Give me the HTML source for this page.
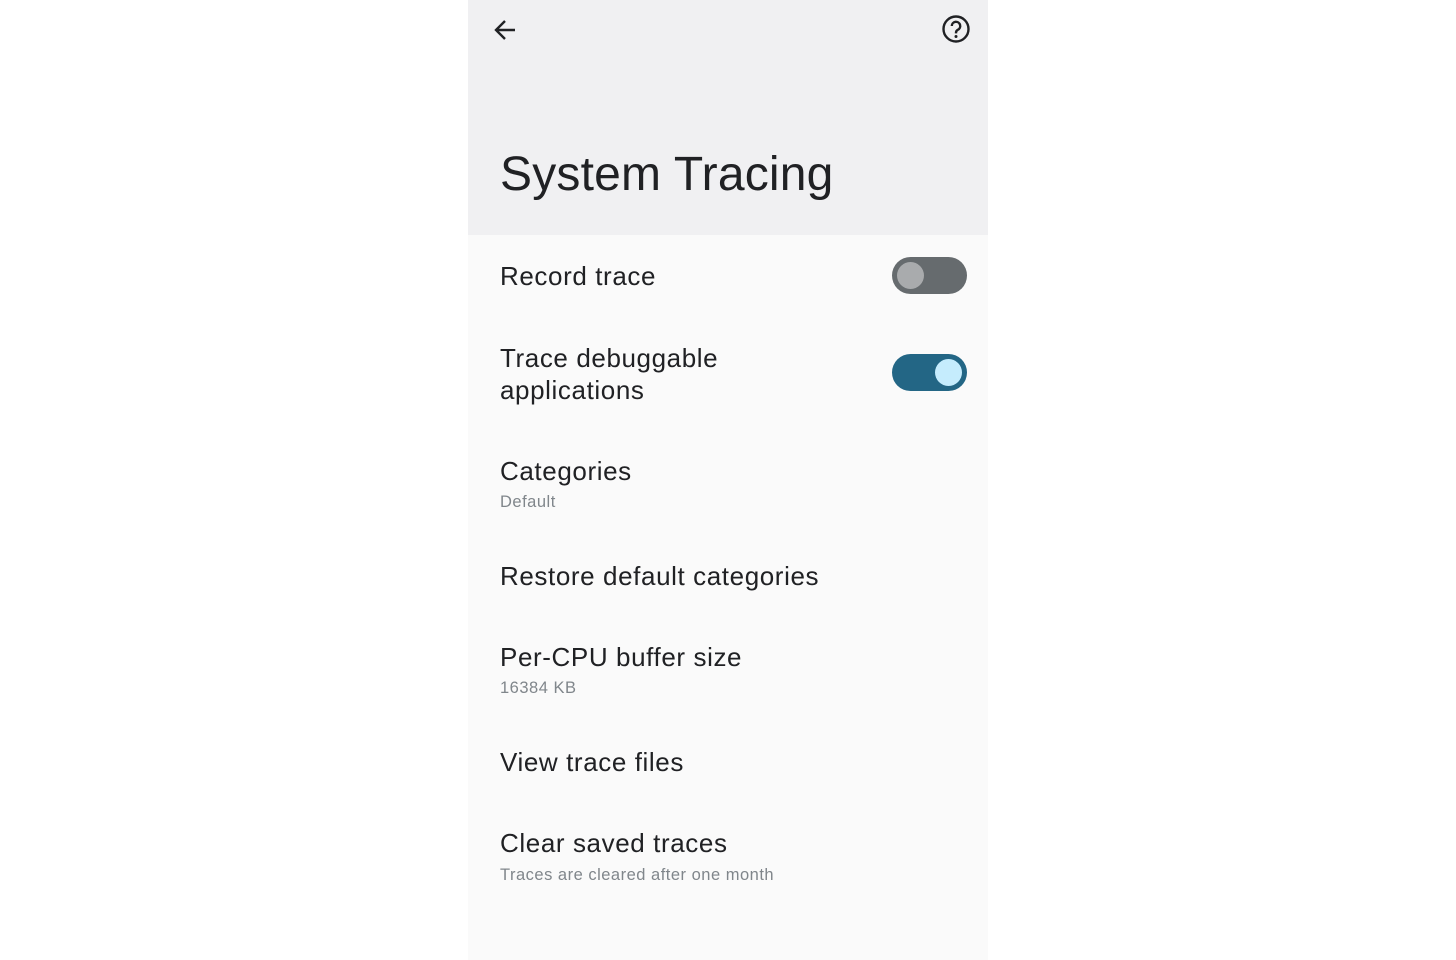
<!DOCTYPE html>
<html><head><style>
body{margin:0;width:1456px;height:960px;background:#fff;position:relative;overflow:hidden;font-family:"Liberation Sans",sans-serif;}
#p{position:absolute;left:468px;top:0;width:520px;height:960px;background:#fafafa;}
#h{position:absolute;left:0;top:0;width:520px;height:235px;background:#f0f0f2;}
.t{position:absolute;left:32px;color:#202124;font-size:26px;white-space:nowrap;letter-spacing:0.6px;}
.s{position:absolute;left:32px;color:#80868b;font-size:16.5px;white-space:nowrap;letter-spacing:0.5px;}
.tg{position:absolute;left:424px;width:75px;height:37px;border-radius:19px;}
.k{position:absolute;top:5px;width:27px;height:27px;border-radius:50%;}
</style></head><body>
<div id="p">
<div id="h">
<svg style="position:absolute;left:23px;top:16px" width="28" height="28" viewBox="0 0 28 28"><path d="M24 14H5M14 5l-9 9 9 9" stroke="#202124" stroke-width="2.4" fill="none"/></svg>
<svg style="position:absolute;left:473px;top:14px" width="30" height="30" viewBox="0 0 30 30"><circle cx="15" cy="15" r="12.5" stroke="#202124" stroke-width="2.4" fill="none"/><path d="M10.8 12a4.2 4.2 0 1 1 6 3.8c-1.3.7-1.8 1.5-1.8 3v.6" stroke="#202124" stroke-width="2.4" fill="none"/><circle cx="15" cy="22.5" r="1.5" fill="#202124"/></svg>
<div class="t" style="top:147px;font-size:48px;letter-spacing:0.2px">System Tracing</div>
</div>
<div class="t" style="top:261px">Record trace</div>
<div class="tg" style="top:257px;background:#666b6e"><div class="k" style="left:5px;background:#a9abad"></div></div>
<div class="t" style="top:342px;line-height:32px">Trace debuggable<br>applications</div>
<div class="tg" style="top:354px;background:#236685"><div class="k" style="left:43px;background:#c5ecfd"></div></div>
<div class="t" style="top:456px">Categories</div>
<div class="s" style="top:493px">Default</div>
<div class="t" style="top:561px">Restore default categories</div>
<div class="t" style="top:642px">Per-CPU buffer size</div>
<div class="s" style="top:679px">16384 KB</div>
<div class="t" style="top:747px">View trace files</div>
<div class="t" style="top:828px">Clear saved traces</div>
<div class="s" style="top:866px">Traces are cleared after one month</div>
</div>
</body></html>
